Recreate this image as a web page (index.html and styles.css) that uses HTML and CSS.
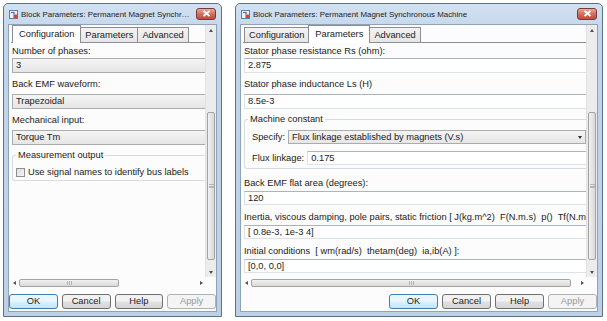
FILE: index.html
```html
<!DOCTYPE html>
<html lang="en">
<head>
    <meta charset="UTF-8">
    <title>Block Parameters</title>
    <link rel="stylesheet" href="styles.css">
</head>
<body>
<div class="desk">

    <!-- Configuration tab -->
    <div class="win win-narrow">
        <div class="titlebar">
            <svg class="appicon" viewBox="0 0 9 9" width="9" height="9">
                <rect x="0.5" y="0.5" width="8" height="8" fill="#eaf2fb" stroke="#5b7fa8"/>
                <path d="M2 2.5h3v2" fill="none" stroke="#2f6db5" stroke-width="1.2"/>
                <rect x="4.5" y="4.5" width="3.5" height="3.5" fill="#d9412b"/>
            </svg>
            <span class="title">Block Parameters: Permanent Magnet Synchronous Machine</span>
            <span class="close"><svg viewBox="0 0 9 7" width="9" height="7"><path d="M1.5 1l6 5M7.5 1l-6 5" stroke="#fff" stroke-width="1.8"/></svg></span>
        </div>
        <div class="client">
            <div class="scroller">
                <div class="view">
                    <div class="tabs">
                        <span class="tab active">Configuration</span>
                        <span class="tab">Parameters</span>
                        <span class="tab">Advanced</span>
                    </div>
                    <div class="panel">
                        <div class="label first">Number of phases:</div>
                        <div class="field combo cut">3</div>
                        <div class="label">Back EMF waveform:</div>
                        <div class="field combo cut">Trapezoidal</div>
                        <div class="label">Mechanical input:</div>
                        <div class="field combo cut">Torque Tm</div>
                        <fieldset class="group group-measure">
                            <legend>Measurement output</legend>
                            <label class="check"><span class="box"></span>Use signal names to identify bus labels</label>
                        </fieldset>
                    </div>
                </div>
                <div class="vscroll">
                    <span class="arrow"><i class="tri up"></i></span>
                    <span class="track"><span class="thumb"><i class="grip"></i></span></span>
                    <span class="arrow"><i class="tri down"></i></span>
                </div>
            </div>
            <div class="hscroll">
                <span class="arrow"><i class="tri left"></i></span>
                <span class="track"><span class="thumb thumb-narrow"><i class="grip"></i></span></span>
                <span class="arrow"><i class="tri right"></i></span>
                <span class="corner"></span>
            </div>
            <div class="buttons">
                <span class="btn default">OK</span>
                <span class="btn">Cancel</span>
                <span class="btn">Help</span>
                <span class="btn disabled">Apply</span>
            </div>
        </div>
    </div>

    <!-- Parameters tab -->
    <div class="win win-wide">
        <div class="titlebar">
            <svg class="appicon" viewBox="0 0 9 9" width="9" height="9">
                <rect x="0.5" y="0.5" width="8" height="8" fill="#eaf2fb" stroke="#5b7fa8"/>
                <path d="M2 2.5h3v2" fill="none" stroke="#2f6db5" stroke-width="1.2"/>
                <rect x="4.5" y="4.5" width="3.5" height="3.5" fill="#d9412b"/>
            </svg>
            <span class="title">Block Parameters: Permanent Magnet Synchronous Machine</span>
            <span class="close"><svg viewBox="0 0 9 7" width="9" height="7"><path d="M1.5 1l6 5M7.5 1l-6 5" stroke="#fff" stroke-width="1.8"/></svg></span>
        </div>
        <div class="client">
            <div class="scroller">
                <div class="view">
                    <div class="tabs">
                        <span class="tab">Configuration</span>
                        <span class="tab active">Parameters</span>
                        <span class="tab">Advanced</span>
                    </div>
                    <div class="panel">
                        <div class="label first">Stator phase resistance Rs (ohm):</div>
                        <div class="field cut">2.875</div>
                        <div class="label">Stator phase inductance Ls (H)</div>
                        <div class="field cut">8.5e-3</div>
                        <fieldset class="group group-machine">
                            <legend>Machine constant</legend>
                            <div class="row">
                                <span class="row-label">Specify:</span>
                                <span class="field combo dropdown">Flux linkage established by magnets (V.s)<i class="tri down"></i></span>
                            </div>
                            <div class="row">
                                <span class="row-label">Flux linkage:</span>
                                <span class="field cut">0.175</span>
                            </div>
                        </fieldset>
                        <div class="label">Back EMF flat area (degrees):</div>
                        <div class="field cut">120</div>
                        <div class="label">Inertia, viscous damping, pole pairs, static friction [ J(kg.m^2)&nbsp; F(N.m.s)&nbsp; p()&nbsp; Tf(N.m) ]:</div>
                        <div class="field cut">[ 0.8e-3, 1e-3 4]</div>
                        <div class="label">Initial conditions&nbsp; [ wm(rad/s)&nbsp; thetam(deg)&nbsp; ia,ib(A) ]:</div>
                        <div class="field cut">[0,0, 0,0]</div>
                    </div>
                </div>
                <div class="vscroll">
                    <span class="arrow"><i class="tri up"></i></span>
                    <span class="track"><span class="thumb"><i class="grip"></i></span></span>
                    <span class="arrow"><i class="tri down"></i></span>
                </div>
            </div>
            <div class="hscroll">
                <span class="arrow"><i class="tri left"></i></span>
                <span class="track"><span class="thumb thumb-wide"><i class="grip"></i></span></span>
                <span class="arrow"><i class="tri right"></i></span>
                <span class="corner"></span>
            </div>
            <div class="buttons">
                <span class="btn default">OK</span>
                <span class="btn">Cancel</span>
                <span class="btn">Help</span>
                <span class="btn disabled">Apply</span>
            </div>
        </div>
    </div>

</div>
</body>
</html>
```

FILE: styles.css
```css
body {
    margin: 0;
    background: #fff;
    font-family: "Liberation Sans", Arial, sans-serif;
    font-size: 9.3px;
    color: #1b1b1b;
}
.desk {
    display: flex;
    gap: 13px;
    padding: 3px 0 0 3px;
}

/* window frame */
.win {
    display: flex;
    flex-direction: column;
    height: 314px;
    box-sizing: border-box;
    border: 1px solid #5d7187;
    border-radius: 5px 5px 0 0;
    padding: 0 4px 4px;
    background: linear-gradient(#d3e1f1, #c2d5ea 30px, #bcd0e7);
}
.win-narrow { width: 219px; }
.win-wide { width: 368px; }

.titlebar {
    height: 20px;
    display: flex;
    align-items: center;
    gap: 3px;
    padding: 0 1px;
}
.appicon { flex: none; }
.title {
    flex: 1;
    min-width: 0;
    font-size: 7.9px;
    color: #222;
    white-space: nowrap;
    overflow: hidden;
    text-overflow: ellipsis;
}
.close {
    flex: none;
    width: 20px;
    height: 12px;
    margin-top: -1px;
    box-sizing: border-box;
    display: flex;
    align-items: center;
    justify-content: center;
    border: 1px solid #7b3a3a;
    border-radius: 3px;
    background: linear-gradient(#e9a99b, #d2705e 50%, #c24b3b);
}

/* client area */
.client {
    flex: 1;
    display: flex;
    flex-direction: column;
    background: #fcfcfc;
    border: 1px solid #8ea3ba;
    min-height: 0;
}
.scroller {
    flex: 1;
    display: flex;
    min-height: 0;
}
.view {
    flex: 1;
    min-width: 0;
    overflow: hidden;
    padding-left: 2px;
}

/* tabs */
.tabs {
    display: flex;
    align-items: flex-end;
    height: 17px;
    border-bottom: 1px solid #8c8e94;
    padding-left: 2px;
}
.tab {
    height: 14px;
    line-height: 14px;
    padding: 0 4px;
    border: 1px solid #8c8e94;
    border-bottom: 0;
    margin-left: -1px;
    background: linear-gradient(#f3f3f3, #e6e6e6);
    white-space: nowrap;
}
.tab.active {
    height: 17px;
    line-height: 16px;
    padding: 0 6px;
    background: #fff;
    margin-bottom: -1px;
    position: relative;
}

/* parameter rows */
.panel {
    padding-left: 1px;
}
.label {
    height: 21px;
    line-height: 12px;
    padding-top: 5px;
    box-sizing: border-box;
    white-space: nowrap;
}
.label.first {
    height: 15px;
    padding-top: 2px;
}
.field {
    display: block;
    height: 15px;
    line-height: 13px;
    box-sizing: border-box;
    padding: 0 3px;
    background: #fff;
    border: 1px solid #dde2e8;
    border-top-color: #aeb2ba;
    white-space: nowrap;
}
.field.cut { margin-right: -12px; }
.field.combo {
    background: linear-gradient(#f4f4f4, #e6e6e6);
    border: 1px solid #acacac;
}

/* group boxes */
.group {
    margin: 4px -12px 0 0;
    padding: 0;
    border: 1px solid #d5dde3;
    border-right: 0;
    border-radius: 3px;
    box-sizing: border-box;
}
.group legend {
    padding: 0 2px;
    margin-left: 3px;
    line-height: 12px;
}
.group-measure {
    height: 32px;
}
.check {
    display: flex;
    align-items: center;
    gap: 3px;
    height: 12px;
    margin: 5px 0 0 3px;
    white-space: nowrap;
}
.box {
    width: 7px;
    height: 7px;
    border: 1px solid #8f8f8f;
    background: linear-gradient(135deg, #dcdcdc, #f7f7f7);
}
.group-machine {
    height: 56px;
    margin-bottom: 2px;
}
.group-machine ~ .label {
    height: 20px;
    padding-top: 6px;
}
.group-machine ~ .field {
    height: 14px;
    line-height: 12px;
}
.row {
    display: flex;
    align-items: center;
    gap: 3px;
    padding-left: 7px;
    margin-top: 5px;
}
.row + .row { margin-top: 7px; }
.row-label { white-space: nowrap; }
.row .field {
    flex: 1;
    height: 14px;
    line-height: 12px;
}
.dropdown {
    display: flex;
    align-items: center;
    justify-content: space-between;
    margin-right: 12px;
}

/* scrollbars */
.vscroll {
    width: 10px;
    flex: none;
    display: flex;
    flex-direction: column;
    background: #ececec;
    border-left: 1px solid #e2e2e2;
}
.vscroll .track {
    flex: 1;
    padding: 77px 0 7px;
    display: flex;
    flex-direction: column;
}
.vscroll .thumb {
    flex: 1;
    margin: 0 1px;
    border: 1px solid #a3a3a3;
    border-radius: 2px;
    background: linear-gradient(90deg, #f1f1f1, #d9d9d9);
    display: flex;
    align-items: center;
    justify-content: center;
}
.vscroll .grip {
    width: 5px;
    height: 4px;
    border-top: 1px solid #b5b5b5;
    border-bottom: 1px solid #b5b5b5;
    box-sizing: border-box;
    background: linear-gradient(#fff0 1px, #b5b5b5 1px, #b5b5b5 2px, #fff0 2px);
}
.arrow {
    flex: none;
    width: 10px;
    height: 10px;
    display: flex;
    align-items: center;
    justify-content: center;
}
.tri {
    width: 0;
    height: 0;
    border: 2px solid transparent;
}
.tri.up { border-bottom: 3px solid #505050; border-top: 0; }
.tri.down { border-top: 3px solid #505050; border-bottom: 0; }
.tri.left { border-right: 3px solid #505050; border-left: 0; }
.tri.right { border-left: 3px solid #505050; border-right: 0; }
.dropdown .tri { border-top-color: #333; }

.hscroll {
    display: flex;
    height: 10px;
    margin-top: 1px;
    background: #fcfcfc;
}
.hscroll .track {
    flex: 1;
    display: flex;
}
.hscroll .thumb {
    border: 1px solid #a3a3a3;
    border-radius: 2px;
    margin: 1px 0;
    background: linear-gradient(#f1f1f1, #d9d9d9);
    display: flex;
    align-items: center;
    justify-content: center;
}
.thumb-narrow { width: 98px; }
.thumb-wide { width: 318px; }
.hscroll .grip {
    width: 5px;
    height: 4px;
    border-left: 1px solid #b5b5b5;
    border-right: 1px solid #b5b5b5;
    box-sizing: border-box;
    background: linear-gradient(90deg, #fff0 1px, #b5b5b5 1px, #b5b5b5 2px, #fff0 2px);
}
.corner {
    width: 10px;
    flex: none;
}

/* dialog buttons */
.buttons {
    display: flex;
    justify-content: flex-end;
    gap: 4px;
    margin-top: 6px;
    padding: 0 0 2px;
}
.btn {
    flex: 0 1 49px;
    height: 15px;
    box-sizing: border-box;
    border: 1px solid #707070;
    border-radius: 3px;
    background: linear-gradient(#f2f2f2 45%, #e0e0e0 55%, #d6d6d6);
    text-align: center;
    line-height: 13px;
}
.btn.default {
    border-color: #3c7fb1;
    background: linear-gradient(#eaf6fd 45%, #d9f0fc 55%, #bee6fd);
}
.btn.disabled {
    border-color: #adb2b5;
    background: #f4f4f4;
    color: #9a9a9a;
}
```
